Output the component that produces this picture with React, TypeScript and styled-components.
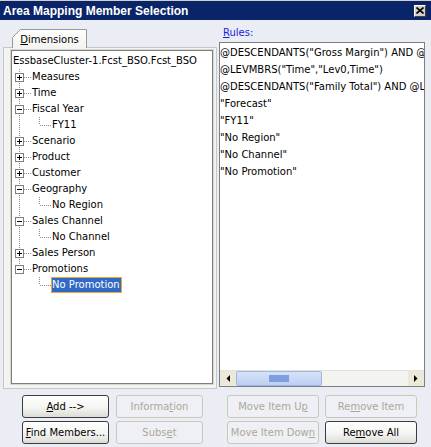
import React from "react";
import styled, { createGlobalStyle } from "styled-components";

const GlobalStyle = createGlobalStyle`
  html, body {
    margin: 0;
    padding: 0;
    background: #ebedf5;
  }
  body {
    font-family: "DejaVu Sans", "Liberation Sans", sans-serif;
    font-size: 10px;
    color: #000;
  }
`;

const Window = styled.div`
  width: 431px;
  height: 447px;
  background: #ebedf5;
  display: flex;
  flex-direction: column;
  overflow: hidden;
`;

const TitleBar = styled.div`
  height: 20px;
  box-sizing: border-box;
  border-top: 1px solid #d4d0c8;
  background: #0a246a;
  display: flex;
  align-items: center;
  justify-content: space-between;
  padding: 0 5px 0 3px;
`;

const Title = styled.span`
  color: #fff;
  font-family: "Liberation Sans", Arial, sans-serif;
  font-weight: bold;
  font-size: 12px;
`;

const CloseButton = styled.div`
  width: 12px;
  height: 12px;
  box-sizing: border-box;
  background: #d4d0c8;
  border: 1px solid;
  border-color: #fff #404040 #404040 #fff;
  display: flex;
  align-items: center;
  justify-content: center;
`;

const Panels = styled.div`
  display: flex;
  gap: 2px;
  padding-left: 3px;
`;

const LeftColumn = styled.div`
  width: 214px;
  padding-top: 9px;
  display: flex;
  flex-direction: column;
`;

const TabStrip = styled.div`
  height: 19px;
  padding-left: 9px;
  display: flex;
  position: relative;
  z-index: 1;
  margin-bottom: -1px;
`;

const Tab = styled.div`
  position: relative;
  width: 75px;
  height: 19px;
  display: flex;
  align-items: center;
  justify-content: center;
`;

const TabShape = styled.svg`
  position: absolute;
  inset: 0;
`;

const TabLabel = styled.span`
  position: relative;
  padding-top: 1px;
`;

const TabPanel = styled.div`
  height: 342px;
  box-sizing: border-box;
  border: 1px solid #c4c7cc;
  padding: 2px 3px 4px 7px;
  background: #f4f4f2;
`;

const TreeBox = styled.div`
  height: 100%;
  box-sizing: border-box;
  border: 1px solid #7f7f7f;
  box-shadow: 0 0 0 1px #d6d6d0;
  background: #fff;
  padding-top: 2px;
  overflow: hidden;
`;

const TreeRow = styled.div`
  height: 16px;
  display: flex;
  align-items: center;
  white-space: nowrap;
`;

const NodeLabel = styled.span<{ $selected?: boolean }>`
  height: 16px;
  box-sizing: border-box;
  line-height: 14px;
  border: 1px solid ${(p) => (p.$selected ? "#f2a43a" : "transparent")};
  background: ${(p) => (p.$selected ? "#316ac5" : "transparent")};
  color: ${(p) => (p.$selected ? "#fff" : "#000")};
  padding-right: 1px;
`;

const RightColumn = styled.div`
  width: 206px;
  padding-top: 6px;
  display: flex;
  flex-direction: column;
`;

const RulesLabel = styled.div`
  height: 14px;
  line-height: 14px;
  padding-left: 4px;
  margin-bottom: 2px;
  color: #1c1cd8;
`;

const RulesBox = styled.div`
  height: 345px;
  box-sizing: border-box;
  border: 1px solid #7f7f7f;
  background: #fff;
  display: flex;
  flex-direction: column;
`;

const RulesList = styled.div`
  flex: 1;
  overflow: hidden;
  padding-top: 1px;
`;

const RuleRow = styled.div`
  height: 17px;
  line-height: 17px;
  white-space: nowrap;
`;

const ScrollBar = styled.div`
  height: 16px;
  display: flex;
  background: #f3f3ef;
  border-top: 1px solid #e2e2dc;
  box-sizing: border-box;
`;

const ArrowButton = styled.div`
  width: 16px;
  height: 100%;
  background: #ece9d8;
  display: flex;
  align-items: center;
  justify-content: center;
`;

const Thumb = styled.div`
  width: 86px;
  height: 100%;
  box-sizing: border-box;
  border: 1px solid #9db6e4;
  border-radius: 2px;
  background: linear-gradient(#d6e2f8, #bccff3);
  display: flex;
  align-items: center;
  justify-content: center;
`;

const Gripper = styled.div`
  width: 20px;
  height: 7px;
  background-image: radial-gradient(circle, #7e9ee0 0.8px, transparent 1px);
  background-size: 2px 2px;
`;

const Track = styled.div`
  flex: 1;
`;

const ButtonsRow = styled.div`
  display: flex;
  gap: 2px;
  padding-left: 3px;
  margin-top: 6px;
`;

const ButtonGrid = styled.div<{ $width: number; $inset: number; $btn: number; $gap: number }>`
  width: ${(p) => p.$width}px;
  box-sizing: border-box;
  padding-left: ${(p) => p.$inset}px;
  display: grid;
  grid-template-columns: ${(p) => p.$btn}px ${(p) => p.$btn}px;
  column-gap: ${(p) => p.$gap}px;
  row-gap: 3px;
`;

const Button = styled.button`
  height: 23px;
  box-sizing: border-box;
  padding: 0;
  font-family: "DejaVu Sans", "Liberation Sans", sans-serif;
  font-size: 10px;
  border-radius: 3px;
  border: 1px solid #3c3c3c;
  color: #000;
  background: linear-gradient(#ffffff, #f4f4f2 55%, #dcdcd6);

  &:disabled {
    border-color: #cac8bb;
    color: #aca899;
    background: #eef0f6;
  }
`;

type Node = {
  label: string;
  level: 0 | 1 | 2;
  expander?: "+" | "-";
  last?: boolean;
  parentLast?: boolean;
  selected?: boolean;
};

const nodes: Node[] = [
  { label: "EssbaseCluster-1.Fcst_BSO.Fcst_BSO", level: 0 },
  { label: "Measures", level: 1, expander: "+" },
  { label: "Time", level: 1, expander: "+" },
  { label: "Fiscal Year", level: 1, expander: "-" },
  { label: "FY11", level: 2 },
  { label: "Scenario", level: 1, expander: "+" },
  { label: "Product", level: 1, expander: "+" },
  { label: "Customer", level: 1, expander: "+" },
  { label: "Geography", level: 1, expander: "-" },
  { label: "No Region", level: 2 },
  { label: "Sales Channel", level: 1, expander: "-" },
  { label: "No Channel", level: 2 },
  { label: "Sales Person", level: 1, expander: "+" },
  { label: "Promotions", level: 1, expander: "-", last: true },
  { label: "No Promotion", level: 2, parentLast: true, selected: true },
];

const rules = [
  '@DESCENDANTS("Gross Margin") AND @DESCENDANTS("Net Income")',
  '@LEVMBRS("Time","Lev0,Time")',
  '@DESCENDANTS("Family Total") AND @LEVMBRS("Product","Lev0,Product")',
  '"Forecast"',
  '"FY11"',
  '"No Region"',
  '"No Channel"',
  '"No Promotion"',
];

const DOT = { stroke: "#8c8c8c", strokeWidth: 1, strokeDasharray: "1 1", shapeRendering: "crispEdges" as const };

const Guides = ({ node }: { node: Node }) => {
  if (node.level === 0) return null;
  if (node.level === 1) {
    return (
      <svg width="19" height="16">
        <line x1="7.5" y1="0" x2="7.5" y2={node.last ? 8 : 16} {...DOT} />
        <line x1="12" y1="8.5" x2="19" y2="8.5" {...DOT} />
        <rect x="3.5" y="4.5" width="8" height="8" fill="#fff" stroke="#7f7f7f" shapeRendering="crispEdges" />
        <line x1="5" y1="8.5" x2="10" y2="8.5" stroke="#000" shapeRendering="crispEdges" />
        {node.expander === "+" && (
          <line x1="7.5" y1="6" x2="7.5" y2="11" stroke="#000" shapeRendering="crispEdges" />
        )}
      </svg>
    );
  }
  return (
    <svg width="39" height="16">
      {!node.parentLast && <line x1="7.5" y1="0" x2="7.5" y2="16" {...DOT} />}
      <line x1="27.5" y1="0" x2="27.5" y2="8" {...DOT} />
      <line x1="28" y1="8.5" x2="39" y2="8.5" {...DOT} />
    </svg>
  );
};

const Arrow = ({ dir }: { dir: "left" | "right" }) => (
  <svg width="4" height="7">
    <polygon points={dir === "left" ? "4,0 4,7 0.5,3.5" : "0,0 0,7 3.5,3.5"} fill="#000" />
  </svg>
);

export default function App() {
  return (
    <Window>
      <GlobalStyle />
      <TitleBar>
        <Title>Area Mapping Member Selection</Title>
        <CloseButton>
          <svg width="8" height="7">
            <path d="M0.5 0.5 L7.5 6.5 M7.5 0.5 L0.5 6.5" stroke="#000" strokeWidth="1.6" />
          </svg>
        </CloseButton>
      </TitleBar>

      <Panels>
        <LeftColumn>
          <TabStrip>
            <Tab>
              <TabShape width="75" height="19">
                <defs>
                  <linearGradient id="tabFill" x1="0" y1="0" x2="0" y2="1">
                    <stop offset="0" stopColor="#ffffff" />
                    <stop offset="1" stopColor="#f3f3ef" />
                  </linearGradient>
                </defs>
                <path d="M0.5 19 L0.5 8.5 L8.5 0.5 L74.5 0.5 L74.5 19" fill="url(#tabFill)" stroke="#919b9c" />
              </TabShape>
              <TabLabel>
                <u>D</u>imensions
              </TabLabel>
            </Tab>
          </TabStrip>
          <TabPanel>
            <TreeBox>
              {nodes.map((n) => (
                <TreeRow key={n.label}>
                  <Guides node={n} />
                  <NodeLabel $selected={n.selected}>{n.label}</NodeLabel>
                </TreeRow>
              ))}
            </TreeBox>
          </TabPanel>
        </LeftColumn>

        <RightColumn>
          <RulesLabel>
            <u>R</u>ules:
          </RulesLabel>
          <RulesBox>
            <RulesList>
              {rules.map((r) => (
                <RuleRow key={r}>{r}</RuleRow>
              ))}
            </RulesList>
            <ScrollBar>
              <ArrowButton>
                <Arrow dir="left" />
              </ArrowButton>
              <Thumb>
                <Gripper />
              </Thumb>
              <Track />
              <ArrowButton>
                <Arrow dir="right" />
              </ArrowButton>
            </ScrollBar>
          </RulesBox>
        </RightColumn>
      </Panels>

      <ButtonsRow>
        <ButtonGrid $width={214} $inset={19} $btn={87} $gap={7}>
          <Button>
            <u>A</u>dd --&gt;
          </Button>
          <Button disabled>
            Informa<u>t</u>ion
          </Button>
          <Button>
            <u>F</u>ind Members...
          </Button>
          <Button disabled>
            Subs<u>e</u>t
          </Button>
        </ButtonGrid>
        <ButtonGrid $width={206} $inset={8} $btn={92} $gap={6}>
          <Button disabled>
            Move Item U<u>p</u>
          </Button>
          <Button disabled>
            Re<u>m</u>ove Item
          </Button>
          <Button disabled>
            Move Item Dow<u>n</u>
          </Button>
          <Button>
            Re<u>m</u>ove All
          </Button>
        </ButtonGrid>
      </ButtonsRow>
    </Window>
  );
}
